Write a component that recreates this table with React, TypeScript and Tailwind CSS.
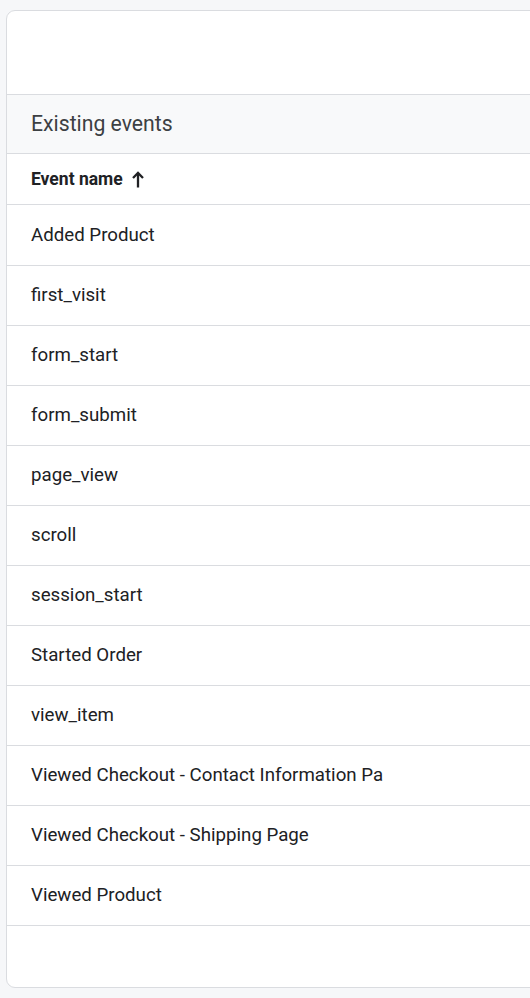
import React from "react";

const rows = [
  "Added Product",
  "first_visit",
  "form_start",
  "form_submit",
  "page_view",
  "scroll",
  "session_start",
  "Started Order",
  "view_item",
  "Viewed Checkout - Contact Information Pa",
  "Viewed Checkout - Shipping Page",
  "Viewed Product",
];

export default function App() {
  return (
    <div
      className="w-[530px] h-[998px] overflow-hidden bg-[#f6f7f9] pl-[6px] pt-[10px]"
      style={{ fontFamily: "Roboto, 'Noto Sans', sans-serif" }}
    >
      <div className="w-[560px] h-[978px] bg-white border border-[#dadce0] rounded-[9px] flex flex-col overflow-hidden">
        <div className="h-[84px] shrink-0 border-b border-[#dadce0]" />
        <div className="h-[59px] shrink-0 bg-[#f8f9fa] border-b border-[#dadce0] flex items-center pl-[24px] text-[21.2px] text-[#3c4043]">
          Existing events
        </div>
        <div className="h-[51px] shrink-0 border-b border-[#dadce0] flex items-center pl-[24px] text-[17.5px] font-bold text-[#202124]">
          <span>Event name</span>
          <svg width="12" height="17" viewBox="0 0 12 17" className="ml-[9px]" fill="none" stroke="#202124" strokeWidth="2.3">
            <path d="M6 2V16.5" />
            <path d="M1 7L6 2L11 7" />
          </svg>
        </div>
        <div className="h-[61px] shrink-0 border-b border-[#dadce0] flex items-center pl-[24px] text-[18.7px] text-[#202124] whitespace-nowrap">
          {rows[0]}
        </div>
        {rows.slice(1).map((r) => (
          <div
            key={r}
            className="h-[60px] shrink-0 border-b border-[#dadce0] flex items-center pl-[24px] text-[18.7px] text-[#202124] whitespace-nowrap"
          >
            {r}
          </div>
        ))}
      </div>
    </div>
  );
}
